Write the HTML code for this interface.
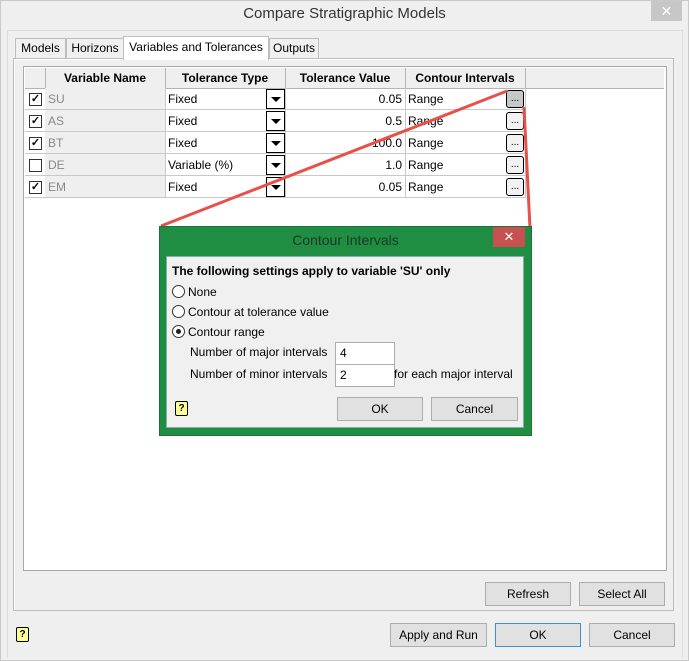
<!DOCTYPE html>
<html><head><style>
*{box-sizing:border-box;margin:0;padding:0}
body{width:689px;height:661px;background:#efefef;font-family:"Liberation Sans",sans-serif;font-size:12px;color:#000;position:relative;overflow:hidden}
.a{position:absolute}
.btn{position:absolute;border:1px solid #adadad;background:#e1e1e1;text-align:center;font-size:12px;line-height:22px}
.tab{position:absolute;border:1px solid #bdbdbd;border-bottom:none;background:#f0f0f0;text-align:center;font-size:12px;line-height:19px}
.cell{position:absolute;border-right:1px solid #c8c8c8;border-bottom:1px solid #c8c8c8;height:22px;line-height:22px;padding-left:3px}
.h{position:absolute;top:68px;height:20px;line-height:20px;font-weight:bold;text-align:center}
.sep{position:absolute;top:68px;width:1px;height:20px;background:#b4b4b4}
.dd{position:absolute;width:19px;height:20px;border:1px solid #000;background:#fff}
.dd:after{content:"";position:absolute;left:4px;top:7px;border-left:5px solid transparent;border-right:5px solid transparent;border-top:5px solid #000}
.dots{position:absolute;width:18px;height:18px;border:1px solid #000;border-radius:3px;background:#f2f2f2;font-size:10px;text-align:center;line-height:16px}
.cb{position:absolute;width:13px;height:13px;border:1px solid #333;background:#fff;font-size:11px;line-height:11px;text-align:center;font-weight:bold}
.radio{position:absolute;width:13px;height:13px;border:1px solid #333;border-radius:50%;background:#fff}
.help{position:absolute;width:13px;height:15px;border:1px solid #000;background:#ffff99;font-size:10px;font-weight:bold;text-align:center;line-height:13px;border-radius:2px}
</style></head><body>
<div class="a" style="left:0;top:0;width:689px;height:661px;border:1px solid #c9c9c9"></div>
<div class="a" style="left:0;top:5px;width:689px;text-align:center;font-size:15px;color:#333">Compare Stratigraphic Models</div>
<div class="a" style="left:651px;top:1px;width:31px;height:20px;background:#c7c7c7;color:#fff;text-align:center;font-size:14px;line-height:20px">✕</div>
<div class="a" style="left:7px;top:30px;width:676px;height:628px;border:1px solid #dcdcdc;border-bottom:none"></div>

<div class="tab" style="left:15px;top:38px;width:51px;height:21px">Models</div>
<div class="tab" style="left:66px;top:38px;width:58px;height:21px">Horizons</div>
<div class="tab" style="left:269px;top:38px;width:50px;height:21px">Outputs</div>
<div class="a" style="left:13px;top:58px;width:661px;height:553px;border:1px solid #bdbdbd;background:#efefef;box-shadow:inset 1px 1px 0 #fff"></div>
<div class="tab" style="left:123px;top:36px;width:146px;height:24px;background:#fff;line-height:20px">Variables and Tolerances</div>

<div class="a" style="left:23px;top:66px;width:644px;height:505px;border:1px solid #a9a9a9;background:#fff"></div>
<div class="a" style="left:25px;top:68px;width:639px;height:21px;background:#efefef;border-bottom:1px solid #b4b4b4"></div>
<div class="sep" style="left:45px"></div><div class="sep" style="left:165px"></div><div class="sep" style="left:285px"></div><div class="sep" style="left:405px"></div><div class="sep" style="left:525px"></div>
<div class="h" style="left:45px;width:120px">Variable Name</div>
<div class="h" style="left:165px;width:120px">Tolerance Type</div>
<div class="h" style="left:285px;width:120px">Tolerance Value</div>
<div class="h" style="left:405px;width:120px">Contour Intervals</div>

<div class="cell" style="left:25px;top:88px;width:21px"></div><div class="cb" style="left:29px;top:93px">✓</div>
<div class="cell" style="left:45px;top:88px;width:121px;background:#efefef;color:#888">SU</div>
<div class="cell" style="left:165px;top:88px;width:121px">Fixed</div><div class="dd" style="left:266px;top:89px"></div>
<div class="cell" style="left:285px;top:88px;width:121px;text-align:right;padding-right:3px">0.05</div>
<div class="cell" style="left:405px;top:88px;width:121px">Range</div><div class="dots" style="left:506px;top:90px;background:#c8c8c8">...</div>

<div class="cell" style="left:25px;top:110px;width:21px"></div><div class="cb" style="left:29px;top:115px">✓</div>
<div class="cell" style="left:45px;top:110px;width:121px;background:#efefef;color:#888">AS</div>
<div class="cell" style="left:165px;top:110px;width:121px">Fixed</div><div class="dd" style="left:266px;top:111px"></div>
<div class="cell" style="left:285px;top:110px;width:121px;text-align:right;padding-right:3px">0.5</div>
<div class="cell" style="left:405px;top:110px;width:121px">Range</div><div class="dots" style="left:506px;top:112px">...</div>

<div class="cell" style="left:25px;top:132px;width:21px"></div><div class="cb" style="left:29px;top:137px">✓</div>
<div class="cell" style="left:45px;top:132px;width:121px;background:#efefef;color:#888">BT</div>
<div class="cell" style="left:165px;top:132px;width:121px">Fixed</div><div class="dd" style="left:266px;top:133px"></div>
<div class="cell" style="left:285px;top:132px;width:121px;text-align:right;padding-right:3px">100.0</div>
<div class="cell" style="left:405px;top:132px;width:121px">Range</div><div class="dots" style="left:506px;top:134px">...</div>

<div class="cell" style="left:25px;top:154px;width:21px"></div><div class="cb" style="left:29px;top:159px"></div>
<div class="cell" style="left:45px;top:154px;width:121px;background:#efefef;color:#888">DE</div>
<div class="cell" style="left:165px;top:154px;width:121px">Variable (%)</div><div class="dd" style="left:266px;top:155px"></div>
<div class="cell" style="left:285px;top:154px;width:121px;text-align:right;padding-right:3px">1.0</div>
<div class="cell" style="left:405px;top:154px;width:121px">Range</div><div class="dots" style="left:506px;top:156px">...</div>

<div class="cell" style="left:25px;top:176px;width:21px"></div><div class="cb" style="left:29px;top:181px">✓</div>
<div class="cell" style="left:45px;top:176px;width:121px;background:#efefef;color:#888">EM</div>
<div class="cell" style="left:165px;top:176px;width:121px">Fixed</div><div class="dd" style="left:266px;top:177px"></div>
<div class="cell" style="left:285px;top:176px;width:121px;text-align:right;padding-right:3px">0.05</div>
<div class="cell" style="left:405px;top:176px;width:121px">Range</div><div class="dots" style="left:506px;top:178px">...</div>

<svg class="a" style="left:0;top:0" width="689" height="661"><line x1="161" y1="226" x2="507" y2="91" stroke="#e8504a" stroke-width="3"/><line x1="524" y1="107" x2="530" y2="228" stroke="#e8504a" stroke-width="3"/></svg>

<div class="btn" style="left:485px;top:582px;width:86px;height:24px">Refresh</div>
<div class="btn" style="left:579px;top:582px;width:86px;height:24px">Select All</div>
<div class="help" style="left:16px;top:627px">?</div>
<div class="btn" style="left:390px;top:623px;width:97px;height:24px">Apply and Run</div>
<div class="btn" style="left:495px;top:623px;width:86px;height:24px;border-color:#3c8fd8">OK</div>
<div class="btn" style="left:589px;top:623px;width:86px;height:24px">Cancel</div>

<div class="a" style="left:159px;top:226px;width:373px;height:210px;background:#1f8e42;border:1px solid #16733a"></div>
<div class="a" style="left:159px;top:232px;width:373px;text-align:center;font-size:14px;color:#1b3a26">Contour Intervals</div>
<div class="a" style="left:493px;top:227px;width:32px;height:20px;background:#c75050;color:#fff;text-align:center;font-size:13px;line-height:20px">✕</div>
<div class="a" style="left:166px;top:256px;width:358px;height:172px;background:#f0f0f0;border:1px solid #8aa"></div>
<div class="a" style="left:172px;top:264px;font-weight:bold">The following settings apply to variable 'SU' only</div>
<div class="radio" style="left:172px;top:285px"></div><div class="a" style="left:188px;top:285px">None</div>
<div class="radio" style="left:172px;top:305px"></div><div class="a" style="left:188px;top:305px">Contour at tolerance value</div>
<div class="radio" style="left:172px;top:325px"><div class="a" style="left:3px;top:3px;width:5px;height:5px;border-radius:50%;background:#222"></div></div><div class="a" style="left:188px;top:325px">Contour range</div>
<div class="a" style="left:190px;top:345px">Number of major intervals</div>
<div class="a" style="left:335px;top:342px;width:60px;height:23px;border:1px solid #abadb3;background:#fff;padding:3px 4px">4</div>
<div class="a" style="left:190px;top:367px">Number of minor intervals</div>
<div class="a" style="left:335px;top:364px;width:60px;height:23px;border:1px solid #abadb3;background:#fff;padding:3px 4px">2</div>
<div class="a" style="left:394px;top:367px">for each major interval</div>
<div class="help" style="left:175px;top:401px">?</div>
<div class="btn" style="left:337px;top:397px;width:86px;height:24px">OK</div>
<div class="btn" style="left:431px;top:397px;width:87px;height:24px">Cancel</div>
</body></html>
